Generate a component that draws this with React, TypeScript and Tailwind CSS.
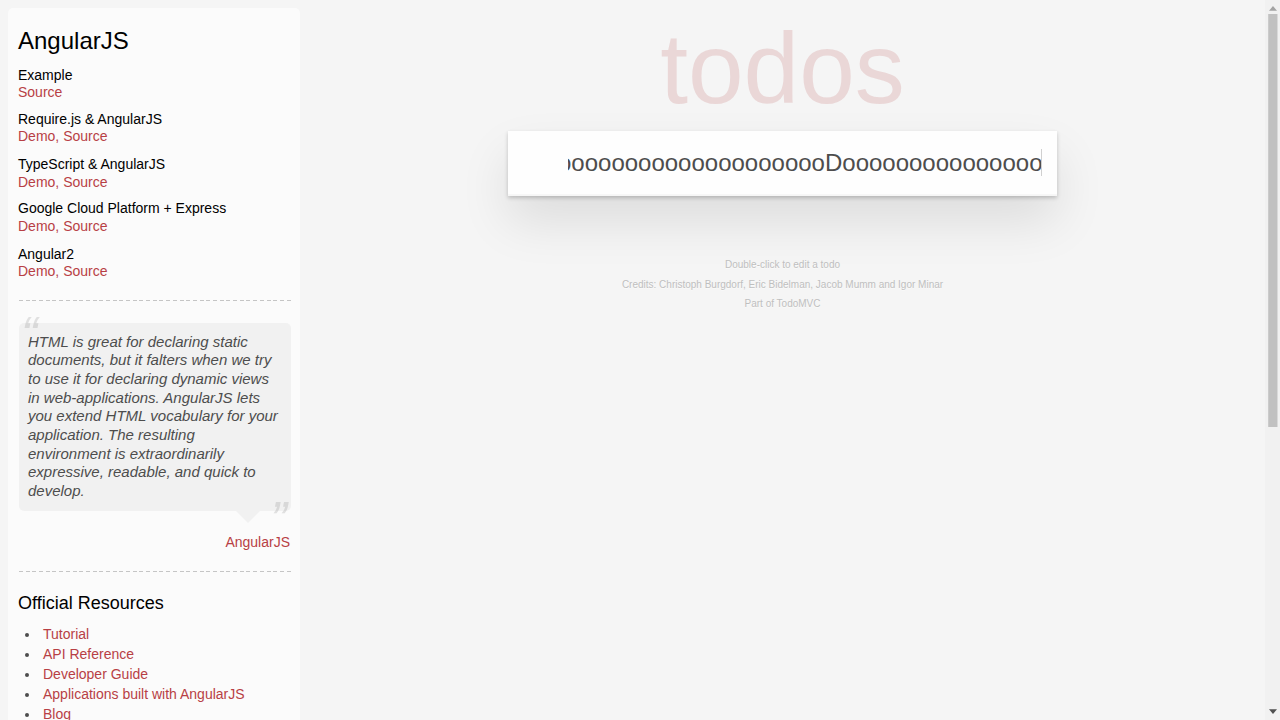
const examples = [
  { name: 'Example', links: ['Source'], spacing: 'mt-[13px] gap-px' },
  { name: 'Require.js & AngularJS', links: ['Demo', 'Source'], spacing: 'mt-[11px] gap-px' },
  { name: 'TypeScript & AngularJS', links: ['Demo', 'Source'], spacing: 'mt-[12px] gap-[2px]' },
  { name: 'Google Cloud Platform + Express', links: ['Demo', 'Source'], spacing: 'mt-[10px] gap-[2px]' },
  { name: 'Angular2', links: ['Demo', 'Source'], spacing: 'mt-[12px] gap-px' },
];

const resources = ['Tutorial', 'API Reference', 'Developer Guide', 'Applications built with AngularJS', 'Blog'];

function Divider() {
  return (
    <div className="-mr-px ml-px h-[2px]">
      <div className="h-px bg-[repeating-linear-gradient(to_right,#c5c5c5_0px,#c5c5c5_4px,transparent_4px,transparent_6.69px)]" />
    </div>
  );
}

function Sidebar() {
  return (
    <aside className="mt-2 ml-2 h-[900px] w-[292px] shrink-0 rounded-[5px] bg-white/60 p-[10px] text-[14px]">
      <h3 className="mt-[9px] text-[24px] leading-[27px] text-black">AngularJS</h3>
      {examples.map((example) => (
        <div key={example.name} className={`flex flex-col leading-[16px] ${example.spacing}`}>
          <h5 className="text-black">{example.name}</h5>
          <div className="text-[#b83f45]">
            {example.links.map((link, i) => (
              <span key={link}>
                {i > 0 && ', '}
                <a>{link}</a>
              </span>
            ))}
          </div>
        </div>
      ))}
      <div className="mt-[21px]">
        <Divider />
      </div>
      <blockquote className="mt-[21px]">
        <div className="relative -mr-px ml-px rounded-[5px] bg-black/[0.04] pt-[9.8px] pr-[11px] pb-[10.2px] pl-[9px]">
          <span className="absolute -top-5 left-[2px] text-[50px] leading-[65px] italic opacity-15">“</span>
          <p className="text-[15px] leading-[18.65px] italic">
            HTML is great for declaring static documents, but it falters when we try to use it for declaring dynamic
            views in web-applications. AngularJS lets you extend HTML vocabulary for your application. The resulting
            environment is extraordinarily expressive, readable, and quick to develop.
          </p>
          <span className="absolute right-[4px] -bottom-[42px] text-[50px] leading-[65px] italic opacity-15">”</span>
          <span className="absolute top-full right-[31px] border-[12px] border-transparent border-t-black/[0.04]" />
        </div>
        <footer className="mt-[21.8px] text-right leading-[19.6px] text-[#b83f45]">
          <a>AngularJS</a>
        </footer>
      </blockquote>
      <div className="mt-[18.75px]">
        <Divider />
      </div>
      <h4 className="mt-[20.25px] text-[18px] leading-[21.6px] text-black">Official Resources</h4>
      <ul className="mt-[9px] ml-[7px] leading-[20px]">
        {resources.map((item) => (
          <li key={item} className="flex items-start">
            <span className="mt-[9.5px] mr-[14px] ml-[0.25px] h-[4px] w-[3.75px] rounded-full bg-[#4d4d4d]" />
            <a className="text-[#b83f45]">{item}</a>
          </li>
        ))}
      </ul>
    </aside>
  );
}

function TodoApp() {
  return (
    <main className="flex min-w-0 flex-1 flex-col items-center">
      <h1 className="mt-[12px] h-[119px] text-[100px] leading-[112px] text-[rgba(175,47,47,0.15)]">todos</h1>
      <section className="ml-[208px] w-[549px] self-start bg-white shadow-[0_2px_4px_0_rgba(0,0,0,0.2),0_25px_50px_0_rgba(0,0,0,0.1)]">
        <div className="flex h-[65px] items-start bg-black/[0.003] pt-[18px] pr-[15px] pl-[60px] shadow-[inset_0_-2px_1px_rgba(0,0,0,0.03)]">
          <div className="relative flex h-[28px] min-w-0 flex-1 justify-end overflow-hidden text-[24px] leading-[28px] whitespace-nowrap">
            <span className="-mr-[0.5px]">DoooooooooooooooooooooDooooooooooooooo</span>
            <span className="absolute top-0 right-0 h-[27px] w-px bg-[#d0d0d0]" />
          </div>
        </div>
      </section>
      <footer className="mt-[64px] flex flex-col gap-[9.5px] text-center text-[10px] leading-[10px] text-[#bfbfbf] [text-shadow:0_1px_0_rgba(255,255,255,0.5)]">
        <p>Double-click to edit a todo</p>
        <p>Credits: Christoph Burgdorf, Eric Bidelman, Jacob Mumm and Igor Minar</p>
        <p>Part of TodoMVC</p>
      </footer>
    </main>
  );
}

function Scrollbar() {
  return (
    <div className="flex h-[720px] w-[15px] shrink-0 flex-col bg-[#f1f1f1]">
      <svg className="h-[14px] w-[15px] shrink-0" viewBox="0 0 15 14">
        <path d="M4 10.7 8 6 12 10.7Z" fill="#a3a3a3" />
      </svg>
      <div className="ml-[3px] h-[413px] w-[10px] shrink-0 border-x border-r-[#dadada] border-l-[#cbcbcb] bg-[#c1c1c1] bg-clip-padding" />
      <svg className="mt-auto h-[14px] w-[15px] shrink-0" viewBox="0 0 15 14">
        <path d="M4 3.3 8 8 12 3.3Z" fill="#505050" />
      </svg>
    </div>
  );
}

export default function App() {
  return (
    <div className="flex h-[720px] overflow-hidden bg-[#f5f5f5] font-['Liberation_Sans',Arial,sans-serif] text-[#4d4d4d]">
      <Sidebar />
      <TodoApp />
      <Scrollbar />
    </div>
  );
}
